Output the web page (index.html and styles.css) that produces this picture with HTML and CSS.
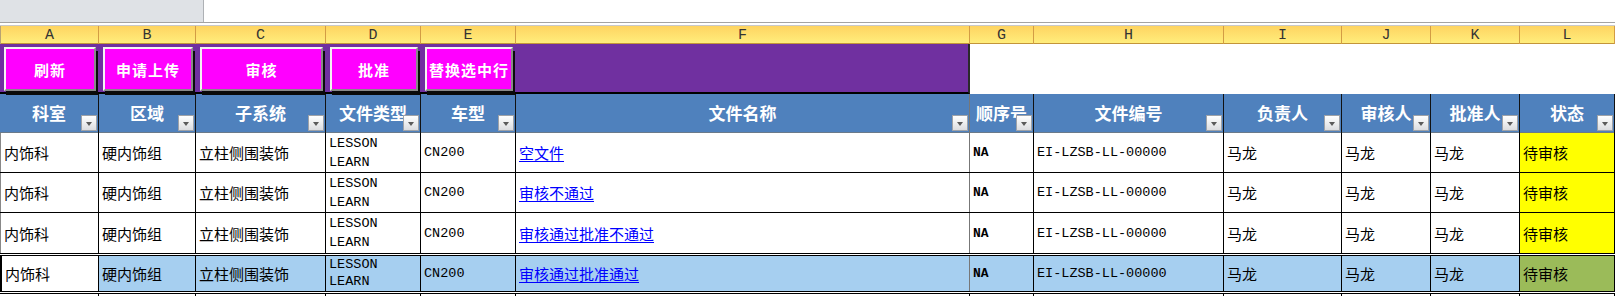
FILE: index.html
```html
<!DOCTYPE html>
<html lang="zh">
<head>
<meta charset="utf-8">
<title>文件管理</title>
<link rel="stylesheet" href="styles.css">
</head>
<body>
<div class="topbar"><div class="namebox"></div><div class="formula"></div></div>
<div class="gap"></div>
<div class="sheet">
  <div class="grid letters">
    <div class="lc">A</div><div class="lc">B</div><div class="lc">C</div><div class="lc">D</div><div class="lc">E</div><div class="lc">F</div><div class="lc">G</div><div class="lc">H</div><div class="lc">I</div><div class="lc">J</div><div class="lc">K</div><div class="lc">L</div>
  </div>
  <div class="grid btnrow">
    <div class="bc"><button class="btn">刷新</button></div>
    <div class="bc"><button class="btn">申请上传</button></div>
    <div class="bc"><button class="btn">审核</button></div>
    <div class="bc"><button class="btn">批准</button></div>
    <div class="bc"><button class="btn">替换选中行</button></div>
    <div class="bc bc-f"></div>
    <div class="wc"></div><div class="wc"></div><div class="wc"></div><div class="wc"></div><div class="wc"></div><div class="wc"></div>
  </div>
  <div class="grid hdr">
    <div class="hc">科室<span class="dd"></span></div>
    <div class="hc">区域<span class="dd"></span></div>
    <div class="hc">子系统<span class="dd"></span></div>
    <div class="hc">文件类型<span class="dd"></span></div>
    <div class="hc">车型<span class="dd"></span></div>
    <div class="hc hc-f">文件名称<span class="dd"></span></div>
    <div class="hc">顺序号<span class="dd"></span></div>
    <div class="hc">文件编号<span class="dd"></span></div>
    <div class="hc">负责人<span class="dd"></span></div>
    <div class="hc">审核人<span class="dd"></span></div>
    <div class="hc">批准人<span class="dd"></span></div>
    <div class="hc">状态<span class="dd"></span></div>
  </div>
  <div class="grid drow">
    <div class="dc">内饰科</div><div class="dc">硬内饰组</div><div class="dc">立柱侧围装饰</div>
    <div class="dc mono two">LESSON<br>LEARN</div><div class="dc mono">CN200</div>
    <div class="dc dc-f"><a class="lnk">空文件</a></div>
    <div class="dc mono na">NA</div><div class="dc mono">EI-LZSB-LL-00000</div>
    <div class="dc">马龙</div><div class="dc">马龙</div><div class="dc">马龙</div><div class="dc st">待审核</div>
  </div>
  <div class="grid drow">
    <div class="dc">内饰科</div><div class="dc">硬内饰组</div><div class="dc">立柱侧围装饰</div>
    <div class="dc mono two">LESSON<br>LEARN</div><div class="dc mono">CN200</div>
    <div class="dc dc-f"><a class="lnk">审核不通过</a></div>
    <div class="dc mono na">NA</div><div class="dc mono">EI-LZSB-LL-00000</div>
    <div class="dc">马龙</div><div class="dc">马龙</div><div class="dc">马龙</div><div class="dc st">待审核</div>
  </div>
  <div class="grid drow">
    <div class="dc">内饰科</div><div class="dc">硬内饰组</div><div class="dc">立柱侧围装饰</div>
    <div class="dc mono two">LESSON<br>LEARN</div><div class="dc mono">CN200</div>
    <div class="dc dc-f"><a class="lnk">审核通过批准不通过</a></div>
    <div class="dc mono na">NA</div><div class="dc mono">EI-LZSB-LL-00000</div>
    <div class="dc">马龙</div><div class="dc">马龙</div><div class="dc">马龙</div><div class="dc st">待审核</div>
  </div>
  <div class="grid drow sel">
    <div class="dc active">内饰科</div><div class="dc">硬内饰组</div><div class="dc">立柱侧围装饰</div>
    <div class="dc mono two">LESSON<br>LEARN</div><div class="dc mono">CN200</div>
    <div class="dc dc-f"><a class="lnk">审核通过批准通过</a></div>
    <div class="dc mono na">NA</div><div class="dc mono">EI-LZSB-LL-00000</div>
    <div class="dc">马龙</div><div class="dc">马龙</div><div class="dc">马龙</div><div class="dc st st-ok">待审核</div>
  </div>
  <div class="grid tail">
    <div></div><div></div><div></div><div></div><div></div><div></div><div></div><div></div><div></div><div></div><div></div><div></div>
  </div>
</div>
</body>
</html>
```

FILE: styles.css
```css
* { box-sizing: border-box; }
html, body { margin: 0; padding: 0; background: #fff; }
body {
  width: 1615px;
  height: 296px;
  overflow: hidden;
  font-family: "Noto Sans CJK SC", "Liberation Sans", sans-serif;
}

.topbar {
  display: flex;
  height: 23px;
  border-bottom: 1px solid #a3a3a3;
}
.namebox {
  width: 204px;
  background: #dfe2e6;
  border-right: 1px solid #aeb1b5;
}
.formula { flex: 1; background: #fff; }
.gap {
  height: 3px;
  border-bottom: 1px solid #c9c9c9;
}

.grid {
  display: grid;
  grid-template-columns: 99px 97px 130px 95px 95px 454px 64px 190px 118px 89px 89px 95px;
}

/* column letters */
.letters {
  height: 18px;
  background: linear-gradient(#fed461, #ffed7c);
  border-bottom: 1px solid #c3953a;
}
.lc {
  border-right: 1px solid #d39c44;
  text-align: center;
  font-family: "Liberation Mono", monospace;
  font-size: 15px;
  line-height: 19px;
  color: #333;
}
.lc:first-child { border-left: 1px solid #b8a272; }

/* button row */
.btnrow { height: 50px; }
.bc {
  background: #7030a0;
  padding: 3px 3px 1px 4px;
  border-bottom: 2px solid #000;
  display: flex;
}
.bc-f { border-right: 2px solid #2a2a2a; }
.wc { background: #fff; }
.btn {
  position: relative;
  z-index: 2;
  flex: 1;
  margin: 0;
  padding: 0;
  background: #ff00ff;
  border-top: 2px solid #f4f4f4;
  border-left: 2px solid #f4f4f4;
  border-right: 2px solid #8a8a8a;
  border-bottom: 2px solid #8a8a8a;
  box-shadow: 2px 4px 0 #0a0a0a;
  color: #fff;
  font-family: "Noto Sans CJK SC", sans-serif;
  font-weight: 700;
  font-size: 15px;
  letter-spacing: 1px;
}

/* header */
.hdr { height: 39px; background: #4f81bd; border-bottom: 1px solid #6a7a8a; }
.hc {
  position: relative;
  border-right: 1px solid #111;
  color: #fff;
  font-weight: 700;
  font-size: 17px;
  line-height: 37px;
  text-align: center;
  padding-bottom: 2px;
}
.hc-f { border-right: 1px solid #777; }
.dd {
  position: absolute;
  right: 1px;
  bottom: 2px;
  width: 16px;
  height: 16px;
  background: linear-gradient(#ffffff, #dcdde0);
  border: 1px solid #9ea2a8;
}
.dd::after {
  content: "";
  position: absolute;
  left: 4px;
  top: 6px;
  border-left: 3.5px solid transparent;
  border-right: 3.5px solid transparent;
  border-top: 4px solid #5a5a5a;
}

/* data */
.drow { height: 40px; border-bottom: 1px solid #000; }
.dc {
  border-right: 1px solid #000;
  padding-left: 3px;
  display: flex;
  align-items: center;
  font-size: 15px;
  color: #000;
  white-space: nowrap;
  overflow: hidden;
}
.dc:first-child { border-left: 1px solid #888; }
.dc-f { border-right: 1px solid #777; }
.mono {
  font-family: "Liberation Mono", monospace;
  font-size: 13.5px;
}
.two {
  align-items: flex-start;
  padding-top: 1px;
  line-height: 19px;
}
.na { font-weight: 700; font-size: 13px; }
.lnk {
  color: #0000ff;
  text-decoration: underline;
  text-underline-offset: 2px;
}
.st { background: #ffff00; }

.sel { border-top: 3px double #000; border-bottom: 3px double #000; height: 41px; }
.sel .two { padding-top: 0; line-height: 17px; }
.sel .dc { background: #a6cff0; }
.sel .dc.active { background: #fff; border-left: 2px solid #000; }
.sel .st-ok { background: #9bbb59; }
.drow:nth-child(6) { border-bottom: none; }

.tail { height: 6px; }
.tail div { border-right: 1px solid #000; }
```
